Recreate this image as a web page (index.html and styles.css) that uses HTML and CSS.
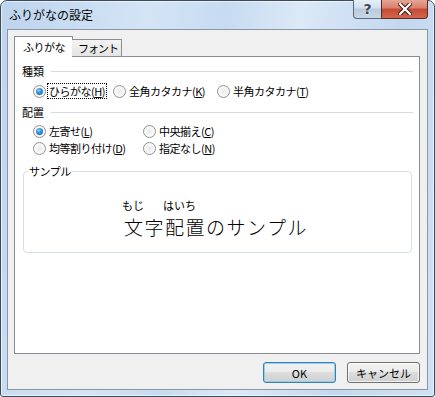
FILE: index.html
```html
<!DOCTYPE html>
<html>
<head>
	<meta charset="utf-8">
	<title>ふりがなの設定</title>
	<link rel="stylesheet" href="styles.css">
</head>
<body>

<div class="window">
	<div class="titlebar">
		<span class="title">ふりがなの設定</span>
		<div class="caption">
			<span class="cap-btn help">?</span>
			<span class="cap-btn close">
				<svg width="14" height="12" viewBox="0 0 14 12">
					<path d="M2 1 L12 11 M12 1 L2 11" stroke="#3a1a14" stroke-width="4.2" stroke-linecap="square"/>
					<path d="M2 1 L12 11 M12 1 L2 11" stroke="#fff" stroke-width="2.2" stroke-linecap="square"/>
				</svg>
			</span>
		</div>
	</div>

	<div class="client">
		<div class="tabs">
			<span class="tab selected">ふりがな</span>
			<span class="tab">フォント</span>
		</div>

		<div class="panel">
			<div class="section">種類</div>
			<div class="options kinds">
				<label class="option"><span class="radio checked"></span><span class="text focus">ひらがな(<u>H</u>)</span></label>
				<label class="option"><span class="radio"></span><span class="text">全角カタカナ(<u>K</u>)</span></label>
				<label class="option"><span class="radio"></span><span class="text">半角カタカナ(<u>T</u>)</span></label>
			</div>

			<div class="section second">配置</div>
			<div class="options align first-row">
				<label class="option"><span class="radio checked"></span><span class="text">左寄せ(<u>L</u>)</span></label>
				<label class="option"><span class="radio"></span><span class="text">中央揃え(<u>C</u>)</span></label>
			</div>
			<div class="options align">
				<label class="option"><span class="radio"></span><span class="text">均等割り付け(<u>D</u>)</span></label>
				<label class="option"><span class="radio"></span><span class="text">指定なし(<u>N</u>)</span></label>
			</div>

			<fieldset class="sample">
				<legend>サンプル</legend>
				<div class="sample-text">
					<span class="word"><span class="reading">もじ</span><span class="base">文字</span></span><span class="word"><span class="reading">はいち</span><span class="base">配置</span></span><span class="word"><span class="reading"></span><span class="base">のサンプル</span></span>
				</div>
			</fieldset>
		</div>

		<div class="buttons">
			<button class="default">OK</button>
			<button>キャンセル</button>
		</div>
	</div>
</div>

</body>
</html>
```

FILE: styles.css
```css
html, body {
	margin: 0;
	padding: 0;
}

body {
	font-family: "Noto Sans CJK JP", "Liberation Sans", sans-serif;
	font-size: 11px;
	color: #000;
	background: #fff;
}

.window {
	box-sizing: border-box;
	width: 435px;
	height: 397px;
	border: 1px solid #3c4a5a;
	border-radius: 7px 7px 3px 3px;
	background: linear-gradient(100deg, #bdd4ee 0%, #d4e4f5 30%, #c6dbf1 45%, #dbe9f7 60%, #c3d8ef 80%, #cfe1f4 100%);
	display: flex;
	flex-direction: column;
	box-shadow: inset 0 0 0 1px rgba(255, 255, 255, 0.6);
}

.titlebar {
	height: 28px;
	display: flex;
	align-items: flex-start;
}

.title {
	margin: 6px 0 0 8px;
	line-height: 16px;
	font-size: 12px;
}

.caption {
	margin: -1px 6px 0 auto;
	display: flex;
}

.cap-btn {
	box-sizing: border-box;
	height: 19px;
	display: flex;
	align-items: center;
	justify-content: center;
	border: 1px solid #5a6a7c;
	border-top: none;
}

.help {
	width: 28px;
	border-radius: 0 0 0 4px;
	border-right: none;
	background: linear-gradient(#e6eef7 0%, #d2dfed 45%, #b9cadc 50%, #c9d8e7 100%);
	color: #3c4654;
	font-family: "DejaVu Sans", sans-serif;
	font-size: 14px;
	font-weight: bold;
	line-height: 1;
	text-shadow: 0 0 2px #fff;
}

.close {
	width: 47px;
	border-color: #5b2a22;
	border-radius: 0 0 4px 0;
	background: linear-gradient(#e5a594 0%, #d8806c 45%, #c44a33 50%, #d3654d 100%);
}

.client {
	box-sizing: border-box;
	height: 361px;
	margin: 0 6px;
	border: 1px solid #8a96a4;
	background: #f0f0f0;
	padding: 6px 7px 6px 6px;
	display: flex;
	flex-direction: column;
}

.tabs {
	display: flex;
	align-items: flex-end;
	height: 20px;
	position: relative;
	z-index: 1;
}

.tab {
	box-sizing: border-box;
	height: 17px;
	width: 50px;
	padding: 0 0 0 6px;
	border: 1px solid #898c95;
	border-bottom: none;
	border-left: none;
	background: linear-gradient(#f3f3f3, #e4e4e4);
	line-height: 16px;
	white-space: nowrap;
	letter-spacing: -1px;
}

.tab.selected {
	height: 21px;
	margin-bottom: -1px;
	width: 59px;
	padding: 2px 0 0 8px;
	border-left: 1px solid #898c95;
	border-right: 1px solid #898c95;
	background: #fff;
	margin-right: -1px;
	letter-spacing: -0.5px;
}

.panel {
	box-sizing: border-box;
	height: 298px;
	border: 1px solid #898c95;
	background: #fff;
	padding: 7px 6px 0 7px;
}

.section {
	display: flex;
	align-items: center;
	height: 14px;
	line-height: 14px;
	gap: 7px;
}

.section::after {
	content: "";
	flex: 1;
	border-top: 1px solid #d5dbe0;
	margin-top: 1px;
}

.section.second {
	margin-top: 5px;
}

.options {
	display: grid;
	margin-left: 11px;
	height: 16px;
}

.kinds {
	grid-template-columns: 80px 104px auto;
	height: 18px;
	margin-top: 4px;
}

.align {
	grid-template-columns: 110px auto;
	margin-top: 1px;
}

.align.first-row {
	margin-top: 4px;
}

.option {
	display: flex;
	align-items: center;
	gap: 1px;
	white-space: nowrap;
}

.text {
	line-height: 14px;
	padding: 0 1px;
	border: 1px solid transparent;
	letter-spacing: -0.5px;
}

.text u {
	text-underline-offset: 1px;
}

.text.focus {
	border: 1px dotted #000;
}

.radio {
	box-sizing: border-box;
	width: 13px;
	height: 13px;
	border-radius: 50%;
	border: 1px solid #8e8f8f;
	background: radial-gradient(circle at 50% 50%, #e6e6e6 0%, #f4f4f4 40%, #fbfbfb 70%);
	position: relative;
}

.radio.checked::after {
	content: "";
	position: absolute;
	left: 2px;
	top: 2px;
	width: 7px;
	height: 7px;
	border-radius: 50%;
	background: radial-gradient(circle at 40% 35%, #8ed0f6 0%, #2c8ed6 45%, #1a5c9a 100%);
}

.sample {
	box-sizing: border-box;
	height: 89px;
	margin: 8px 1px 0 1px;
	padding: 0;
	border: 1px solid #d5dfe5;
	border-radius: 4px;
	min-width: 0;
}

.sample legend {
	padding: 0 1px;
	margin-left: 4px;
	line-height: 14px;
	letter-spacing: -0.5px;
}

.sample-text {
	margin: 21px 0 0 100px;
	display: flex;
}

.word {
	display: inline-flex;
	flex-direction: column;
	align-items: flex-start;
}

.reading {
	font-size: 11px;
	line-height: 12px;
	margin-left: -2px;
	height: 12px;
}

.base {
	font-size: 19px;
	font-weight: 300;
	line-height: 24px;
	letter-spacing: 1.5px;
	margin-top: 4px;
}

.buttons {
	display: flex;
	justify-content: flex-end;
	gap: 11px;
	margin-top: 8px;
}

button {
	box-sizing: border-box;
	width: 73px;
	height: 21px;
	padding: 0;
	font-family: "Noto Sans CJK JP", "Liberation Sans", sans-serif;
	font-size: 11px;
	color: #000;
	border: 1px solid #707070;
	border-radius: 3px;
	background: linear-gradient(#f2f2f2 0%, #ebebeb 45%, #dddddd 50%, #cfcfcf 100%);
	box-shadow: inset 0 0 0 1px rgba(255, 255, 255, 0.7);
}

button.default {
	border-color: #3c7fb1;
	box-shadow: inset 0 0 0 1px #8ed0f0;
}
```
